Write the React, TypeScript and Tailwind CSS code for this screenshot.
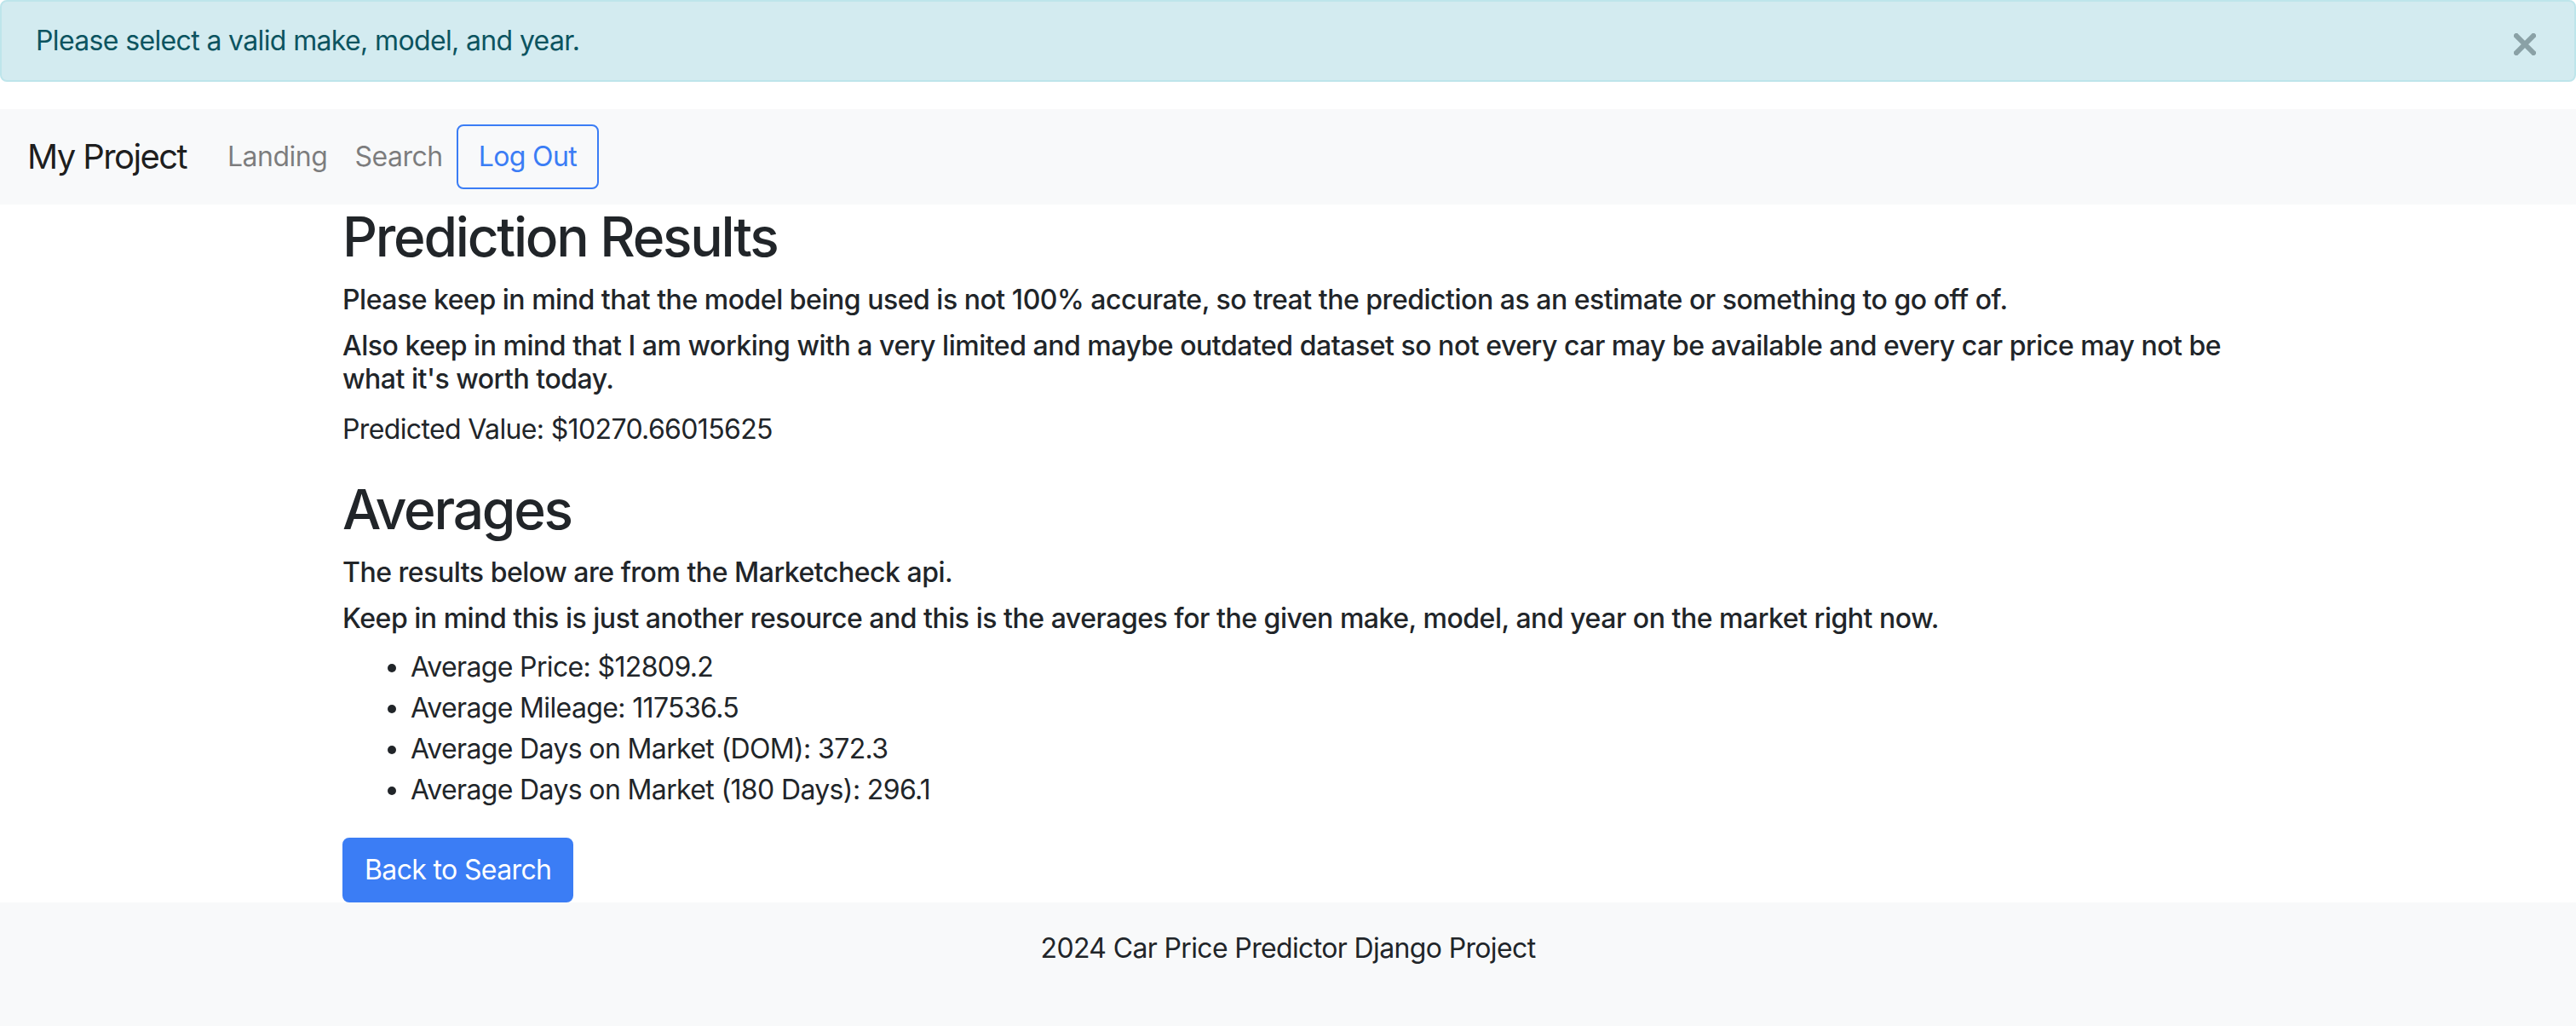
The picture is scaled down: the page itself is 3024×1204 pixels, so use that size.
import React from "react";

const averages = [
  { label: "Average Price", value: "$12809.2" },
  { label: "Average Mileage", value: "117536.5" },
  { label: "Average Days on Market (DOM)", value: "372.3" },
  { label: "Average Days on Market (180 Days)", value: "296.1" },
];

export default function App() {
  return (
    <div
      className="flex min-h-screen flex-col bg-white text-[32px] leading-[1.5] tracking-[-0.02em] text-[#212529]"
      style={{ fontFamily: "Inter, 'Noto Sans', 'Liberation Sans', sans-serif" }}
    >
      {/* Alert */}
      <div className="relative mb-[32px] rounded-[8px] border-2 border-[#bee5eb] bg-[#d3ebf0] py-[22px] pl-[40px] pr-[128px] text-[#0c5460]">
        Please select a valid make, model, and year.
        <button className="absolute right-[45px] top-[37px]" aria-label="Close">
          <svg width="26" height="26" viewBox="0 0 26 26">
            <path d="M3 3 L23 23 M23 3 L3 23" stroke="#8aa1a6" strokeWidth="6" strokeLinecap="square" />
          </svg>
        </button>
      </div>

      {/* Navbar */}
      <nav className="flex items-center bg-[#f8f9fa] px-[32px] py-[16px]">
        <a href="#" className="mr-[32px] py-[10px] text-[40px] leading-[1.5] tracking-[-0.04em] text-black/90">
          My Project
        </a>
        <a href="#" className="px-[16px] py-[16px] tracking-[-0.015em] text-black/50">
          Landing
        </a>
        <a href="#" className="px-[16px] py-[16px] tracking-[-0.015em] text-black/50">
          Search
        </a>
        <button className="rounded-[8px] border-2 border-[#3b7df5] px-[24px] py-[12px] text-[#3b7df5]">
          Log Out
        </button>
      </nav>

      {/* Content */}
      <main className="mx-auto w-[2280px] px-[30px]">
        <h2 className="mb-[16px] text-[64px] font-medium leading-[1.2] tracking-[-0.035em]">Prediction Results</h2>
        <h6 className="mb-[16px] font-medium leading-[1.2] tracking-[-0.015em]">
          Please keep in mind that the model being used is not 100% accurate, so treat the prediction as an estimate or
          something to go off of.
        </h6>
        <h6 className="mb-[16px] font-medium leading-[1.2] tracking-[-0.015em]">
          Also keep in mind that I am working with a very limited and maybe outdated dataset so not every car may be
          available and every car price may not be what it's worth today.
        </h6>
        <p className="mb-[32px]">Predicted Value: $10270.66015625</p>

        <h2 className="mb-[16px] text-[64px] font-medium leading-[1.2] tracking-[-0.035em]">Averages</h2>
        <h6 className="mb-[16px] font-medium leading-[1.2] tracking-[-0.015em]">
          The results below are from the Marketcheck api.
        </h6>
        <h6 className="mb-[13px] font-medium leading-[1.2] tracking-[-0.015em]">
          Keep in mind this is just another resource and this is the averages for the given make, model, and year on the
          market right now.
        </h6>
        <ul className="mb-[32px] list-disc pl-[80px]">
          {averages.map((a) => (
            <li key={a.label}>
              {a.label}: {a.value}
            </li>
          ))}
        </ul>
        <button className="rounded-[8px] border-2 border-[#3b7df5] bg-[#3b7df5] px-[24px] py-[12px] text-white">
          Back to Search
        </button>
      </main>

      {/* Footer */}
      <footer className="flex-1 bg-[#f8f9fa] pt-[30px] text-center">
        <p>2024 Car Price Predictor Django Project</p>
      </footer>
    </div>
  );
}
